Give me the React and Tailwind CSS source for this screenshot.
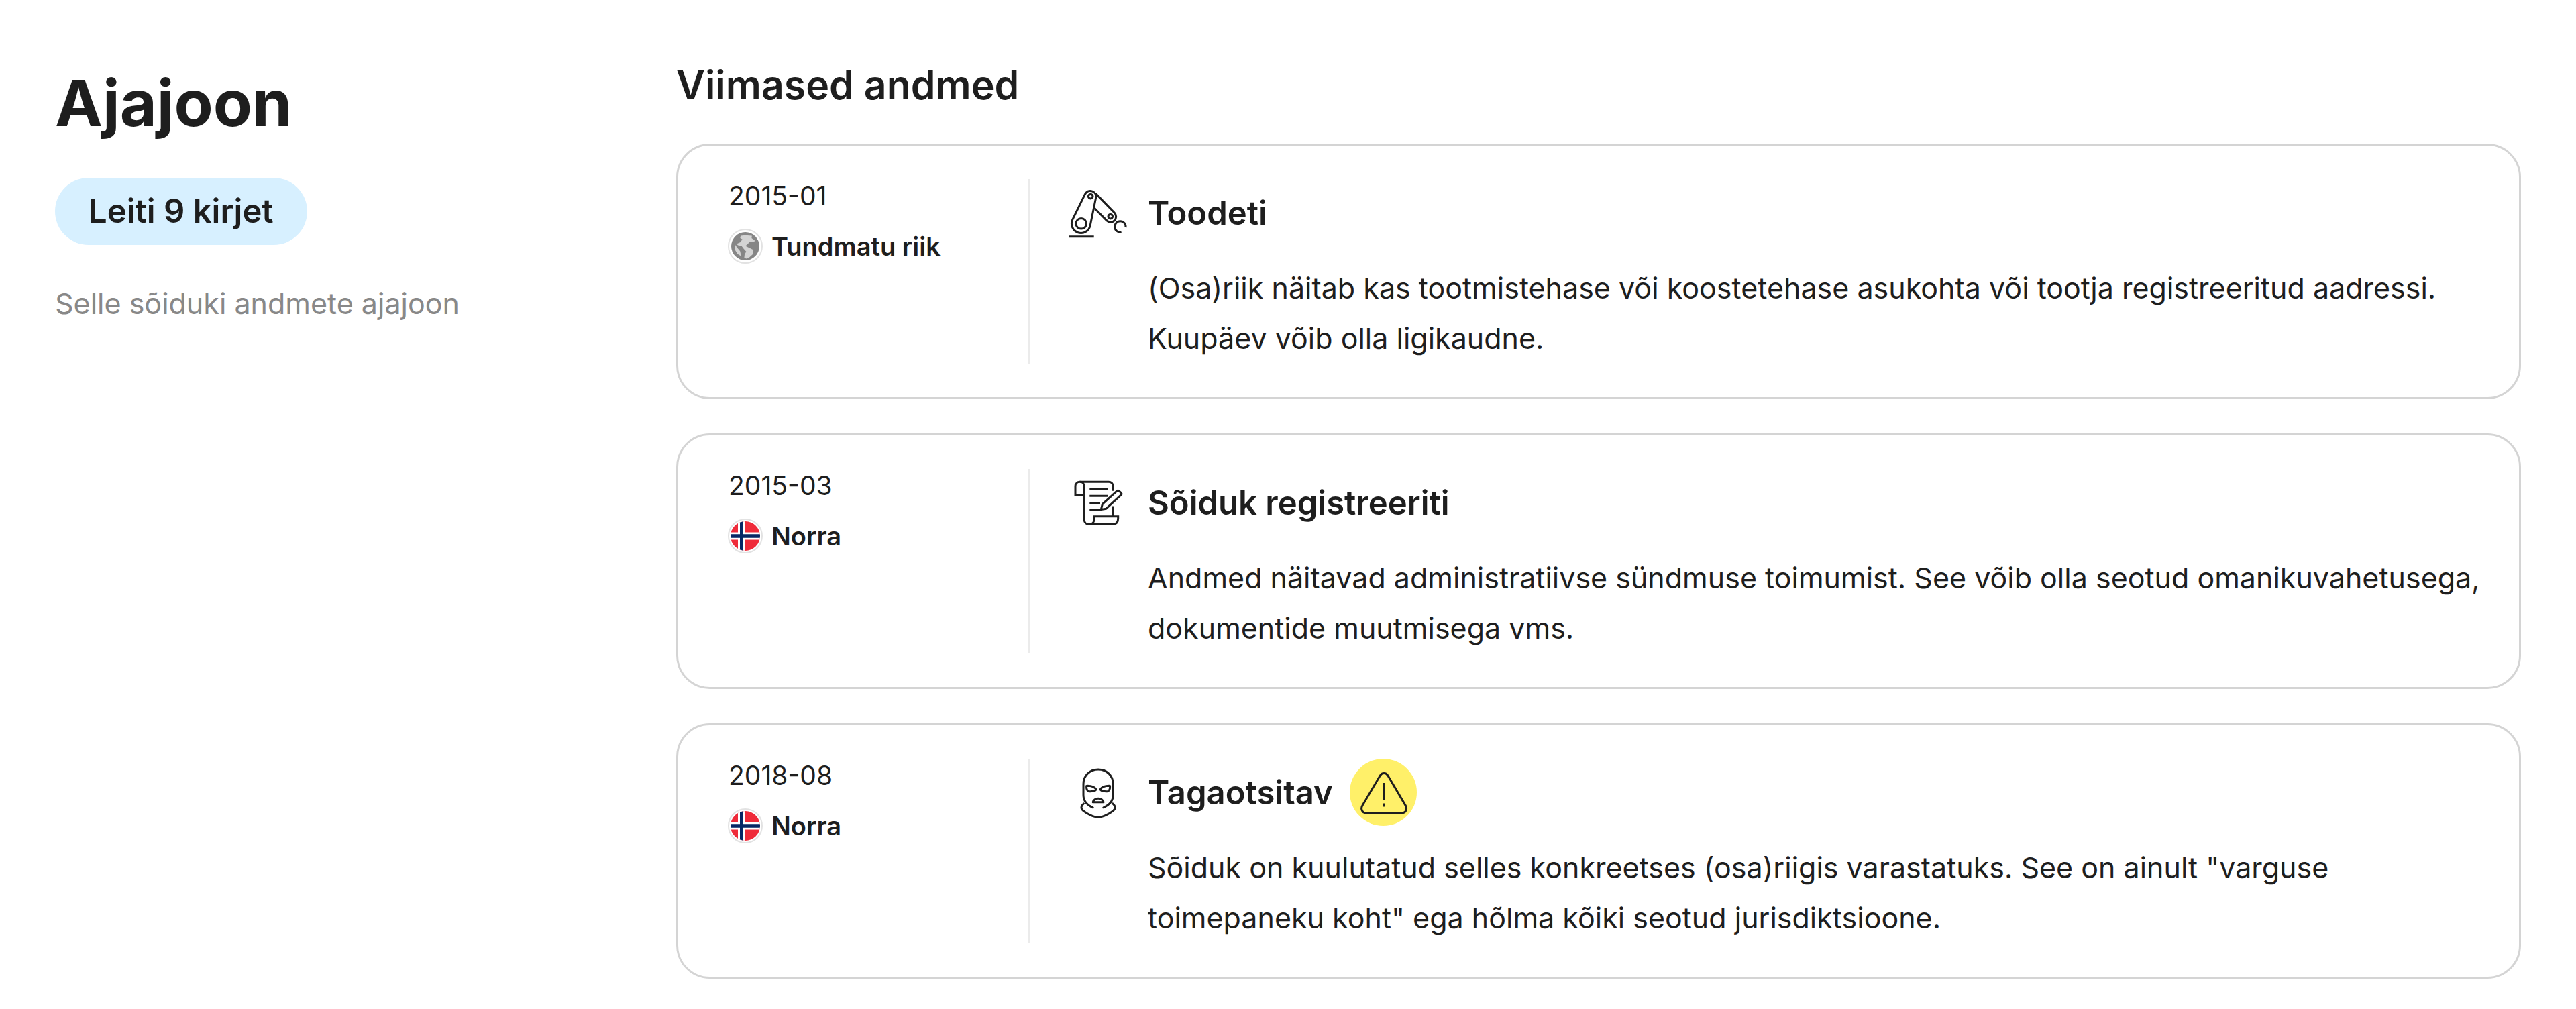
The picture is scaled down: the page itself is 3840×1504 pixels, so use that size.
const stroke = {
  fill: 'none',
  stroke: 'currentColor',
  strokeWidth: 3,
  strokeLinecap: 'round',
  strokeLinejoin: 'round',
};

function RobotArmIcon() {
  return (
    <svg viewBox="0 0 100 100" className="size-[100px] shrink-0" aria-hidden="true" {...stroke}>
      <path d="M31.6 22.2 12.8 60.4A14 14 0 1 0 39.2 69L47.8 27A8.6 8.6 0 0 0 31.6 22.2Z" />
      <circle cx="39.7" cy="25.7" r="3.3" />
      <circle cx="25.7" cy="66.3" r="7.8" />
      <path d="M47.6 21.6 75.4 50.2A8.2 8.2 0 0 1 63.6 61.6L45 42.8" />
      <circle cx="69.3" cy="55.7" r="3.3" />
      <path d="M92 72A8.2 8.2 0 1 0 85.6 79" strokeLinecap="butt" />
      <path d="M7 85.7H44.7" strokeLinecap="butt" />
    </svg>
  );
}

function DocumentIcon() {
  return (
    <svg viewBox="0 0 100 100" className="size-[100px] shrink-0" aria-hidden="true" {...stroke} strokeLinecap="butt" strokeLinejoin="miter">
      <path d="M30.3 38.8H17V25.8C17 21.8 20 19.2 23.7 19.2S30.3 21.8 30.3 25.8V76C30.3 79.8 33.4 82.5 37.4 82.5S45 79.8 45 75V70.8H80.7V73.5C80.7 78.8 78.2 82.5 73 82.5H37.4" />
      <path d="M23.7 19.2H66.5C70.4 19.2 73 21.6 73 25.4V32.8" />
      <path d="M73 55.5V70.8" />
      <path d="M38.3 29.8H65.7M38.3 40.2H65.7M38.3 50.5H54M38.3 60.7H56" />
      <path d="M55.2 60.6 57.4 52.4 79 32.8Q80.5 31.6 82 32.9L85.2 35.7Q86.6 37.2 85.2 38.6L63 59.2Z" strokeLinejoin="round" />
    </svg>
  );
}

function BalaclavaIcon() {
  return (
    <svg viewBox="0 0 100 100" className="size-[100px] shrink-0" aria-hidden="true" {...stroke}>
      <path d="M43.2 72.8C34.6 69 29 62.5 29 54V37.5C29 25 38.5 16 51.1 16S73.3 25 73.3 37.5V54C73.3 62.5 67.4 69 58.8 72.8" />
      <path d="M29.4 66.8C25.4 70.2 24.6 74.2 28.6 77.4C33.6 81.6 44 87.2 51.1 87.2S68.6 81.6 73.6 77.4C77.6 74.2 76.8 70.2 72.8 66.8" />
      <path d="M33.6 40.4C39 40.2 45.6 41.8 48.2 45.8C46.4 48.4 40.6 49 36.4 48.4C34.2 47.2 33.4 44 33.6 40.4Z" />
      <path d="M68.6 40.4C63.2 40.2 56.6 41.8 54 45.8C55.8 48.4 61.6 49 65.8 48.4C68 47.2 68.8 44 68.6 40.4Z" />
      <path d="M43.2 64.8C44.4 60.8 47.4 59.2 51.1 59.2S57.8 60.8 59 64.8Z" />
    </svg>
  );
}

function WarningBadge() {
  return (
    <span className="flex size-[100px] shrink-0 rounded-full bg-[#fff069]" role="img" aria-label="Hoiatus">
      <svg viewBox="0 0 100 100" className="size-full" {...stroke} strokeLinecap="butt">
        <path d="M45.2 25.2 19 69.6C15.6 75.2 19 81 25.2 81H77C83.2 81 86.6 75.2 83.2 69.6L57 25.2C54.2 20.4 48 20.4 45.2 25.2Z" />
        <path d="M51 36V61.7M51 66.4V71.6" />
      </svg>
    </span>
  );
}

function GlobeFlag() {
  return (
    <svg viewBox="0 0 50 50" className="size-[50px] shrink-0 overflow-visible" aria-hidden="true">
      <circle cx="25" cy="25" r="25" fill="#fff" stroke="#e2e2e2" strokeWidth="2" />
      <circle cx="25" cy="25" r="21" fill="#868686" />
      <path fill="#d4d4d4" d="M18 9.6 25 8.8 34.8 9.6 34.4 13 40 17.2 36 18.6 31.6 18.4 27.2 23 25 24.4 29.6 26.8 37.2 30.6 36 37 31 41.4 27 43.4 23.4 42.6 24 37 26.4 33 22.4 28.4 19.4 24.4 14 23.6 12 21.4 17.6 19 20.6 14.8 17.4 13Z" />
      <path fill="#d4d4d4" d="M9.8 22.8 13.2 27.6 17.2 32.2 18.8 39.8 13.4 36.4 9.4 30Z" />
    </svg>
  );
}

function NorwayFlag() {
  return (
    <svg viewBox="0 0 50 50" className="size-[50px] shrink-0 overflow-visible" aria-hidden="true">
      <clipPath id="flag-circle">
        <circle cx="25" cy="25" r="22" />
      </clipPath>
      <circle cx="25" cy="25" r="25" fill="#fff" stroke="#e2e2e2" strokeWidth="2" />
      <g clipPath="url(#flag-circle)">
        <path fill="#ef2b3a" d="M0 0H50V50H0Z" />
        <path fill="#fff" d="M14 0H25V50H14ZM0 19.5H50V30.5H0Z" />
        <path fill="#062765" d="M17 0H22V50H17ZM0 22.3H50V27.7H0Z" />
      </g>
    </svg>
  );
}

const records = [
  {
    date: '2015-01',
    country: 'Tundmatu riik',
    Flag: GlobeFlag,
    Icon: RobotArmIcon,
    title: 'Toodeti',
    text: '(Osa)riik näitab kas tootmistehase või koostetehase asukohta või tootja registreeritud aadressi. Kuupäev võib olla ligikaudne.',
  },
  {
    date: '2015-03',
    country: 'Norra',
    Flag: NorwayFlag,
    Icon: DocumentIcon,
    title: 'Sõiduk registreeriti',
    text: 'Andmed näitavad administratiivse sündmuse toimumist. See võib olla seotud omanikuvahetusega, dokumentide muutmisega vms.',
  },
  {
    date: '2018-08',
    country: 'Norra',
    Flag: NorwayFlag,
    Icon: BalaclavaIcon,
    title: 'Tagaotsitav',
    warning: true,
    text: 'Sõiduk on kuulutatud selles konkreetses (osa)riigis varastatuks. See on ainult "varguse toimepaneku koht" ega hõlma kõiki seotud jurisdiktsioone.',
  },
];

function RecordCard({ date, country, Flag, Icon, title, text, warning }) {
  return (
    <li className="flex rounded-[50px] border-[3px] border-[#d4d4d4] py-[50px] pr-[50px] pl-[75px]">
      <div className="flex w-[450px] shrink-0 flex-col gap-[25px] border-r-[3px] border-[#ebebeb]">
        <time className="text-[39px] leading-[50px]">{date}</time>
        <div className="flex items-center gap-[14px]">
          <Flag />
          <span className="text-[38px] leading-[50px] font-semibold">{country}</span>
        </div>
      </div>
      <div className="grid min-w-0 flex-1 grid-cols-[100px_1fr] gap-[25px] pl-[50px]">
        <Icon />
        <div className="flex items-center gap-[25px]">
          <h3 className="text-[49px] leading-[75px] font-semibold">{title}</h3>
          {warning && <WarningBadge />}
        </div>
        <p className="col-start-2 text-[43px] leading-[75px]">{text}</p>
      </div>
    </li>
  );
}

export default function App() {
  return (
    <main className="grid min-h-screen grid-cols-[926px_1fr] bg-white px-[82px] pt-[82px] font-['Inter',sans-serif] text-[#1e1e1e]">
      <header className="flex flex-col items-start">
        <h1 className="text-[95px] leading-[144px] font-bold">Ajajoon</h1>
        <p className="mt-[39px] rounded-full bg-[#d7f0ff] px-[50px] text-[49px] leading-[100px] font-semibold">Leiti 9 kirjet</p>
        <p className="mt-[50px] text-[43px] leading-[75px] text-[#888888]">Selle sõiduki andmete ajajoon</p>
      </header>
      <section className="min-w-0">
        <h2 className="text-[59px] leading-[90px] font-semibold">Viimased andmed</h2>
        <ul className="mt-[42px] flex flex-col gap-[51px]">
          {records.map((record) => (
            <RecordCard key={record.title} {...record} />
          ))}
        </ul>
      </section>
    </main>
  );
}
